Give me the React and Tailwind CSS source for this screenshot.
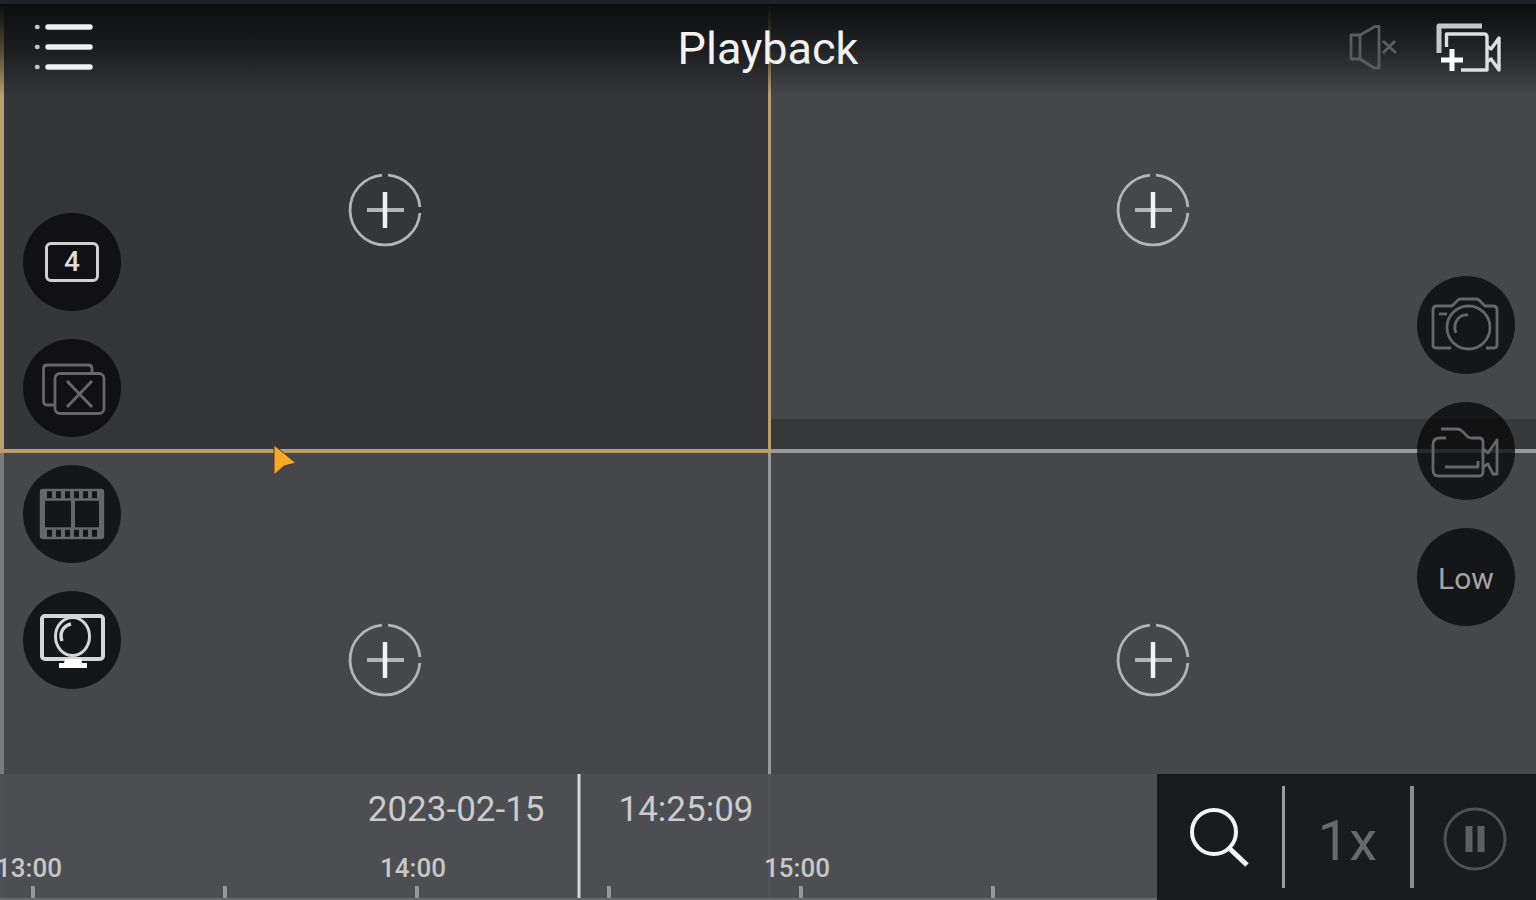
import React, { useState } from 'react';

const hours = ['13:00', '', '14:00', '', '15:00', ''];

function AddCamera({ label }) {
  return (
    <button aria-label={label} className="block">
      <svg width="74" height="74" viewBox="0 0 74 74" fill="none">
        <path d="M40 2.1A35 35 0 0 1 71.9 34M71.9 40A35 35 0 1 1 34 2.1" stroke="#b4b4b6" strokeWidth="2.8" />
        <path d="M19 37H56" stroke="#b4b4b6" strokeWidth="4" />
        <path d="M37 19V55" stroke="#f2f2f2" strokeWidth="4.5" />
      </svg>
    </button>
  );
}

function RoundButton({ label, children }) {
  return (
    <button
      aria-label={label}
      className="pointer-events-auto flex h-[98px] w-[98px] items-center justify-center rounded-full bg-[#050607]/75 text-[#66676a]"
    >
      {children}
    </button>
  );
}

function Icon({ children }) {
  return (
    <svg width="98" height="98" viewBox="0 0 98 98" fill="none" stroke="currentColor" strokeWidth="2.8" strokeLinejoin="round">
      {children}
    </svg>
  );
}

function Header() {
  return (
    <header className="pointer-events-auto grid h-24 grid-cols-[1fr_auto_1fr] items-center border-t-4 border-[#20212b] bg-linear-to-b from-[#0c0d0e] via-[#0c0d0e]/60 to-transparent px-[34px] pb-1">
      <button aria-label="Menu" className="justify-self-start">
        <svg width="60" height="50" viewBox="0 0 60 50" stroke="#f0f0f0" strokeWidth="5.5" strokeLinecap="round">
          <path d="M14 4H56M14 24H56M14 44H56" />
          <path d="M3 4H3.500M3 24H3.500M3 44H3.500" stroke="#c4c4c4" strokeWidth="4.5" />
        </svg>
      </button>
      <h1 className="text-[45px] leading-none text-[#f2f2f2]">Playback</h1>
      <div className="flex items-center gap-[38px] justify-self-end">
        <button aria-label="Sound off">
          <svg width="49" height="46" viewBox="0 0 49 46" fill="none" stroke="#5b5c5e" strokeWidth="2.8" strokeLinejoin="round">
            <path d="M11 10H2V34H11L25 43H30V1.5H26L11 10V34" />
            <path d="M34 16L47 28M46 16L34 28" />
          </svg>
        </button>
        <button aria-label="Add cameras">
          <svg width="66" height="52" viewBox="0 0 66 52" fill="none" stroke="#dededf" strokeWidth="3.4" strokeLinejoin="round">
            <path d="M3 31V4H46" stroke="#c6c6c8" strokeWidth="5" />
            <path d="M10.5 25V12H48Q51 12 51 15V48H25" />
            <path d="M51 24L55 27L63 16V48L55 37L51 40" />
            <path d="M16 27V49M5 38H27" stroke="#ffffff" strokeWidth="5" />
          </svg>
        </button>
      </div>
    </header>
  );
}

function LeftTools() {
  return (
    <div className="flex flex-col gap-7">
      <RoundButton label="Split screen">
        <span className="flex h-10 w-[54px] items-center justify-center rounded-md border-[3px] border-[#cfcfd0] text-[28px] leading-none font-medium text-[#dcdcdc]">
          4
        </span>
      </RoundButton>
      <RoundButton label="Close all windows">
        <Icon>
          <path d="M32 66H24Q20.500 66 20.500 62V30Q20.500 26 24 26H65Q69 26 69 30V34" />
          <rect x="32" y="34.500" width="49" height="40" rx="5" />
          <path d="M44 42L69 68M69 42L44 68" strokeWidth="3" />
        </Icon>
      </RoundButton>
      <RoundButton label="Video clips">
        <Icon>
          <rect x="18" y="25" width="62" height="48" rx="2" strokeWidth="2.4" />
          <path d="M20 34.500H78M20 63.500H78" strokeWidth="2.4" />
          <path d="M50 35V63" strokeWidth="4" />
          <path d="M20.500 26V72M77.500 26V72" strokeWidth="3" />
          <path d="M20 30H78M20 68H78" strokeWidth="8" strokeDasharray="4 5" />
        </Icon>
      </RoundButton>
      <RoundButton label="Fisheye">
        <Icon>
          <g stroke="#d6d6d7">
            <rect x="19" y="25" width="61" height="43" rx="3" strokeWidth="4" />
            <ellipse cx="49.500" cy="45.500" rx="17" ry="19" fill="#141516" strokeWidth="3" />
            <path d="M39 50C36 42 40 35 48 33" strokeWidth="3.500" />
            <path d="M42 68H58L59 72H64V77H36V72H41Z" fill="#fff" stroke="none" />
          </g>
        </Icon>
      </RoundButton>
    </div>
  );
}

function RightTools() {
  return (
    <div className="flex flex-col gap-7">
      <RoundButton label="Snapshot">
        <Icon>
          <path d="M34 72H19Q16 72 16 69V34Q16 30 20 30H35L41 24Q42 23 44 23H59Q61 23 62 24L68 30H76Q80 30 80 34V69Q80 72 77 72H69" />
          <circle cx="51.500" cy="51.500" r="21.500" />
          <path d="M39 57C35 47 42 38 51 39" />
          <path d="M22 38H30" />
        </Icon>
      </RoundButton>
      <RoundButton label="Record">
        <Icon>
          <path d="M24 27H40Q43 27 45 29L51 35Q53 36 55 36H62Q66 36 66 40V70Q66 74 62 74H22Q16 74 16 68V43Q16 36 23 36H29" />
          <path d="M28 65H61V59" />
          <path d="M66 47L71 51L80 38V72H76L71 62L66 65" />
        </Icon>
      </RoundButton>
      <RoundButton label="Stream quality">
        <span className="pt-1 text-[30px] leading-none text-[#a3a4a5]">Low</span>
      </RoundButton>
    </div>
  );
}

function Timeline() {
  return (
    <section aria-label="Timeline" className="relative flex min-w-0 flex-1 flex-col justify-between overflow-hidden border-b-2 border-[#66676a] bg-[#4e4f52]/95">
      <div className="grid grid-cols-2 pt-4 text-[35px] leading-10 text-[#cacbcd]">
        <span className="pr-[34px] text-right">2023-02-15</span>
        <span className="pl-10">14:25:09</span>
      </div>
      <div className="-ml-[63px] flex items-end">
        {hours.map((hour, i) => (
          <div key={i} className="flex w-48 shrink-0 flex-col items-center gap-0.5">
            <span className="pr-2 text-[26px] leading-8 font-medium text-[#c6c7c9]">{hour}</span>
            <span className="h-3 w-1 bg-[#959698]"></span>
          </div>
        ))}
      </div>
      <div className="absolute inset-y-0 left-1/2 w-[3px] -translate-x-1/2 bg-[#d6d6d8]"></div>
    </section>
  );
}

function Controls({ playing, onToggle }) {
  return (
    <div className="flex items-center bg-[#1a1b1d]">
      <button aria-label="Search" className="flex w-[125px] justify-center">
        <svg width="60" height="60" viewBox="0 0 60 60" fill="none" stroke="#f4f4f4">
          <circle cx="24" cy="25" r="22" strokeWidth="4" />
          <path d="M39 41L57 58" strokeWidth="5" />
        </svg>
      </button>
      <span className="h-[102px] w-[3px] bg-[#9b9c9d]"></span>
      <button className="w-[125px] pt-2 text-[56px] leading-none text-[#68696b]">1x</button>
      <span className="h-[102px] w-1 bg-[#8b8c8d]"></span>
      <button aria-label={playing ? 'Pause' : 'Play'} onClick={onToggle} className="flex w-[122px] justify-center pt-1">
        <svg width="64" height="64" viewBox="0 0 64 64" fill="none" stroke="#4f5052">
          <circle cx="32" cy="32" r="30" strokeWidth="3" />
          {playing ? (
            <path d="M26 19V45M38 19V45" stroke="#5e5f61" strokeWidth="7" />
          ) : (
            <path d="M25 18L46 32L25 46Z" fill="#5e5f61" stroke="none" />
          )}
        </svg>
      </button>
    </div>
  );
}

export default function App() {
  const [playing, setPlaying] = useState(true);

  return (
    <div className="relative h-screen overflow-hidden bg-[#46474b] font-['Roboto','Liberation_Sans',sans-serif]">
      {/* camera windows, the first one is selected */}
      <main className="grid h-full grid-cols-[771fr_765fr] grid-rows-[453fr_447fr]">
        <div className="flex items-center justify-center border-r-[3px] border-b-4 border-l-4 border-[#b99f6b] bg-[#35363a] pr-0.5 pb-[30px]">
          <AddCamera label="Add camera to window 1" />
        </div>
        <div className="flex flex-col border-b-4 border-[#99999c]">
          <div className="flex flex-1 items-center justify-center pr-0.5">
            <AddCamera label="Add camera to window 2" />
          </div>
          <div className="h-[30px] bg-[#38393a]"></div>
        </div>
        <div className="flex items-center justify-center border-r-[3px] border-l-4 border-r-[#98999c] border-l-[#7b7c80] pr-0.5 pb-[33px]">
          <AddCamera label="Add camera to window 3" />
        </div>
        <div className="flex items-center justify-center pr-0.5 pb-[33px]">
          <AddCamera label="Add camera to window 4" />
        </div>
      </main>

      <div className="pointer-events-none absolute inset-0 flex flex-col">
        <Header />
        <div className="flex flex-1 items-center justify-between pt-8 pr-[21px] pl-[23px]">
          <LeftTools />
          <RightTools />
        </div>
        <footer className="pointer-events-auto flex h-[126px]">
          <Timeline />
          <Controls playing={playing} onToggle={() => setPlaying(!playing)} />
        </footer>
      </div>

      <svg className="pointer-events-none absolute top-[444px] left-[272px]" width="26" height="34" viewBox="0 0 26 34">
        <path d="M2 1L24 19L12 22L2 31Z" fill="#f9a826" stroke="#4a3a24" strokeWidth="1" />
      </svg>
    </div>
  );
}
